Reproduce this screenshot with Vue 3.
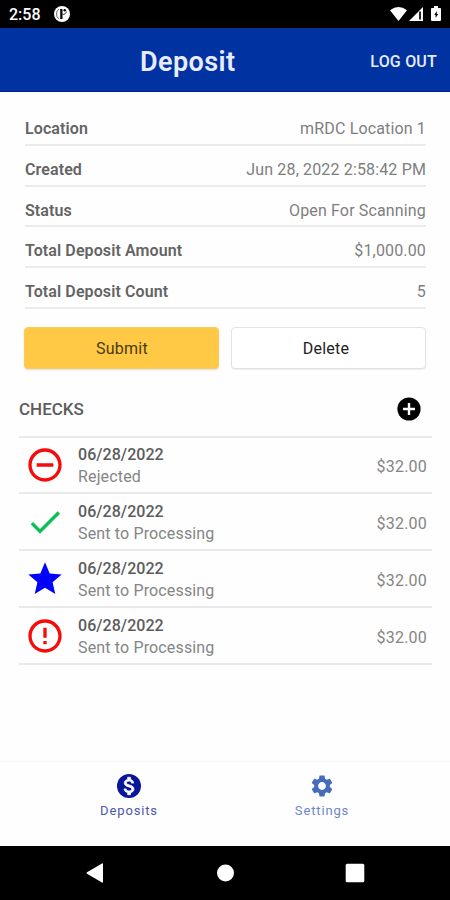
<script setup>
const details = [
  { label: 'Location', value: 'mRDC Location 1' },
  { label: 'Created', value: 'Jun 28, 2022 2:58:42 PM' },
  { label: 'Status', value: 'Open For Scanning' },
  { label: 'Total Deposit Amount', value: '$1,000.00' },
  { label: 'Total Deposit Count', value: '5' }
]
const icons = {
  minus: 'M7 11v2h10v-2H7zm5-9C6.480 2 2 6.480 2 12s4.480 10 10 10 10-4.480 10-10S17.520 2 12 2zm0 18c-4.410 0-8-3.590-8-8s3.590-8 8-8 8 3.590 8 8-3.590 8-8 8z',
  tick: 'M9 16.170L4.830 12l-1.420 1.410L9 19 21 7l-1.410-1.410z',
  star: 'M12 17.270L18.180 21l-1.640-7.030L22 9.240l-7.190-.610L12 2 9.190 8.630 2 9.240l5.460 4.730L5.820 21z',
  error: 'M11 15h2v2h-2zm0-8h2v6h-2zm.990-5C6.470 2 2 6.480 2 12s4.470 10 9.990 10C17.520 22 22 17.520 22 12S17.520 2 11.990 2zM12 20c-4.420 0-8-3.580-8-8s3.580-8 8-8 8 3.580 8 8-3.580 8-8 8z'
}
const checks = [
  { icon: 'minus', status: 'Rejected' },
  { icon: 'tick', status: 'Sent to Processing' },
  { icon: 'star', status: 'Sent to Processing' },
  { icon: 'error', status: 'Sent to Processing' }
]
</script>

<template>
  <div class="screen">
    <div class="statusbar">
      <span class="clock">2:58</span>
      <svg class="app-badge" viewBox="0 0 16 16">
        <circle cx="8" cy="8" r="8" fill="#fff" />
        <path d="M4.800 3.200Q2.500 5 2.500 8t2.300 4.800" fill="none" stroke="#555" stroke-width=".9" />
        <path d="M6.200 3h2.300v10H6.200z" fill="#000" />
        <path d="M8.500 8.500c2.200 0 3.600-1.200 3.900-2.900" fill="none" stroke="#333" stroke-width="1" />
        <circle cx="10.800" cy="4.300" r="1.300" fill="#000" />
      </svg>
      <svg class="signals" viewBox="0 0 54 16">
        <path d="M1 4.200Q9.500-2.200 18 4.200L9.500 15z" fill="#fff" />
        <path d="M34 1v14H20z" fill="#fff" />
        <path d="M31 5.500v8" stroke="#000" stroke-width="1.700" />
        <path d="M43 2h2V0h4v2h2q1 0 1 1v11q0 1-1 1h-8q-1 0-1-1V3q0-1 1-1z" fill="#fff" />
        <path d="M47.800 5 45.300 9h1.300v3L49.200 8h-1.400z" fill="#000" />
      </svg>
    </div>

    <header class="header">
      <h1 class="title">Deposit</h1>
      <span class="logout">LOG OUT</span>
    </header>

    <main class="content">
      <dl class="details">
        <div v-for="d in details" :key="d.label" class="detail">
          <dt>{{ d.label }}</dt>
          <dd>{{ d.value }}</dd>
        </div>
      </dl>

      <div class="actions">
        <button class="btn primary">Submit</button>
        <button class="btn">Delete</button>
      </div>

      <div class="checks-head">
        <h2>CHECKS</h2>
        <svg class="add" viewBox="0 0 24 24">
          <circle cx="12" cy="12" r="11.600" fill="#000" />
          <path d="M12 6v12M6 12h12" stroke="#fff" stroke-width="2.400" />
        </svg>
      </div>

      <ul class="checks">
        <li v-for="(c, i) in checks" :key="i" class="row">
          <svg :class="['row-icon', c.icon]" viewBox="0 0 24 24"><path :d="icons[c.icon]" /></svg>
          <div class="row-text">
            <span class="date">06/28/2022</span>
            <span class="state">{{ c.status }}</span>
          </div>
          <span class="amount">$32.00</span>
        </li>
      </ul>
    </main>

    <nav class="tabs">
      <div class="tab active">
        <svg class="tab-icon" viewBox="1 1 22 22">
          <circle cx="12" cy="12" r="11" />
          <path class="dollar" d="M13.410 18.090V20h-2.670v-1.930c-1.710-.360-3.160-1.460-3.270-3.400h1.960c.1 1.050.820 1.870 2.650 1.870 1.960 0 2.400-.980 2.400-1.590 0-.830-.440-1.610-2.670-2.140-2.480-.6-4.180-1.620-4.180-3.670 0-1.720 1.390-2.840 3.110-3.210V4h2.670v1.950c1.860.450 2.790 1.860 2.850 3.390H14.300c-.050-1.110-.640-1.870-2.220-1.870-1.500 0-2.400.680-2.400 1.640 0 .840.650 1.390 2.670 1.910s4.180 1.390 4.180 3.910c-.010 1.830-1.380 2.830-3.120 3.160z" />
        </svg>
        <span>Deposits</span>
      </div>
      <div class="tab">
        <svg class="tab-icon" viewBox="1 1 22 22">
          <path d="M19.140 12.940c.040-.3.060-.610.060-.940 0-.320-.020-.640-.070-.940l2.030-1.580c.180-.140.230-.410.120-.610l-1.920-3.320c-.120-.220-.370-.290-.590-.220l-2.390.960c-.5-.380-1.030-.7-1.620-.940l-.360-2.540c-.040-.240-.240-.410-.480-.410h-3.840c-.240 0-.430.170-.470.410l-.360 2.540c-.590.240-1.130.570-1.620.940l-2.390-.960c-.220-.080-.470 0-.590.220L2.740 8.870c-.120.210-.080.470.120.610l2.030 1.580c-.050.3-.090.630-.090.940s.020.640.070.940l-2.030 1.580c-.180.140-.230.410-.120.610l1.920 3.320c.120.220.370.290.590.220l2.390-.960c.5.380 1.030.7 1.620.940l.360 2.540c.050.240.240.410.480.410h3.840c.240 0 .440-.170.470-.410l.360-2.540c.590-.240 1.130-.560 1.620-.940l2.390.960c.220.080.470 0 .590-.220l1.920-3.320c.120-.220.070-.470-.120-.610l-2.010-1.580zM12 15.600c-1.980 0-3.600-1.620-3.600-3.600s1.620-3.600 3.600-3.600 3.600 1.620 3.600 3.600-1.620 3.600-3.600 3.600z" />
        </svg>
        <span>Settings</span>
      </div>
    </nav>

    <div class="sysnav">
      <svg viewBox="0 0 20 20"><path d="M18 1v18q0 1-1 .5L2 10.800q-1-.8 0-1.600L17 .5q1-.5 1 .5z" fill="#fff" /></svg>
      <svg viewBox="0 0 20 20"><circle cx="10.500" cy="10" r="8.500" fill="#fff" /></svg>
      <svg viewBox="0 0 20 20"><rect x=".7" y=".7" width="18.600" height="18.600" rx="1.500" fill="#fff" /></svg>
    </div>
  </div>
</template>

<style>
body {
  margin: 0;
  background: #fff;
}
</style>

<style scoped>
.screen {
  width: 450px;
  height: 900px;
  display: flex;
  flex-direction: column;
  background: #fefefe;
  font-family: Roboto, "Liberation Sans", sans-serif;
  box-sizing: border-box;
  overflow: hidden;
}
.screen * { box-sizing: border-box; }
.statusbar {
  height: 28px;
  flex: none;
  display: flex;
  align-items: center;
  padding: 0 7px 0 9px;
  background: #000;
  color: #fff;
}
.clock {
  width: 45px;
  font-size: 16px;
  font-weight: 500;
  line-height: 20px;
  padding-top: 2px;
}
.app-badge { width: 16px; height: 16px; }
.signals { width: 54px; height: 16px; margin-left: auto; }
.header {
  height: 64px;
  flex: none;
  display: grid;
  grid-template-columns: 100px 1fr 100px;
  align-items: center;
  background: #0033a1;
  border-bottom: 1px solid #0a1c9c;
  color: #e9ecfa;
  padding: 4px 13px 0 0;
}
.title {
  grid-column: 2;
  margin: 0;
  padding-left: 40px;
  font-size: 27px;
  font-weight: 600;
  line-height: 32px;
  letter-spacing: 0.4px;
}
.logout {
  text-align: right;
  font-size: 16px;
  font-weight: 500;
  letter-spacing: 0.2px;
  white-space: nowrap;
}
.content {
  flex: 1;
  padding: 13px 18px 0 19px;
}
.details { margin: 0 6px; }
.detail {
  height: 40.75px;
  display: flex;
  justify-content: space-between;
  align-items: center;
  padding-top: 8.5px;
  border-bottom: 2px solid #ebebeb;
  font-size: 16px;
}
dt { color: #646464; font-weight: 600; letter-spacing: 0.1px; }
dd { margin: 0; color: #7e7e7e; letter-spacing: 0.15px; }
.actions {
  display: grid;
  grid-template-columns: 195px 195px;
  gap: 12px;
  margin: 18px 5px 0;
}
.btn {
  height: 42px;
  padding: 2px 5px 0 0;
  border: 1px solid #e3e3e3;
  border-radius: 4px;
  background: #fff;
  color: #222;
  font: 16px Roboto, "Liberation Sans", sans-serif;
  letter-spacing: 0.25px;
  box-shadow: 0 1px 1px #eee;
}
.primary {
  padding: 2px 0 0 1px;
  background: #ffc845;
  border-color: #fccb5b;
  color: #4a3a10;
  box-shadow: 0 1px 2px #ddd;
}
.checks-head {
  height: 67px;
  display: flex;
  justify-content: space-between;
  align-items: center;
  padding: 14px 11px 0 0;
}
h2 {
  margin: 0;
  font-size: 17px;
  font-weight: 500;
  color: #5c5c5c;
}
.add { width: 24px; height: 24px; }
.checks {
  margin: 0;
  padding: 0;
  list-style: none;
  border-top: 2px solid #e9e9e9;
}
.row {
  height: 57px;
  display: flex;
  align-items: center;
  border-bottom: 2px solid #e9e9e9;
  padding: 2px 5px 0 6px;
}
.row:first-child { height: 56px; padding-top: 1px; }
.row-icon { width: 40px; height: 40px; fill: #f70a0a; }
.tick { fill: #0dbf58; }
.star { fill: #0000ff; }
.row-text {
  display: flex;
  flex-direction: column;
  margin-left: 13px;
  padding-top: 2px;
  font-size: 16px;
  line-height: 22px;
}
.date { color: #5c5c5c; font-weight: 500; letter-spacing: 0.05px; }
.state { color: #858585; letter-spacing: 0.15px; }
.amount { margin-left: auto; padding-top: 2px; color: #858585; font-size: 16px; letter-spacing: 0.2px; }
.tabs {
  height: 85px;
  flex: none;
  display: grid;
  grid-template-columns: 193px 193px;
  justify-content: center;
  border-top: 1px solid #f7f7f7;
  padding-top: 12px;
}
.tab {
  display: flex;
  flex-direction: column;
  align-items: center;
  gap: 4px;
  color: #7185c9;
  font-size: 13px;
  line-height: 17px;
  letter-spacing: 0.85px;
}
.tab span { padding-left: 1px; }
.tab-icon { width: 24px; height: 24px; fill: #466bbd; }
.active { color: #4c58ac; }
.active .tab-icon { fill: #08169b; }
.tab-icon .dollar { fill: #fff; stroke: #fff; stroke-width: 0.7; }
.sysnav {
  height: 54px;
  flex: none;
  display: flex;
  justify-content: center;
  gap: 110px;
  background: #000;
  padding-top: 17px;
}
.sysnav svg { width: 20px; height: 20px; }
</style>
